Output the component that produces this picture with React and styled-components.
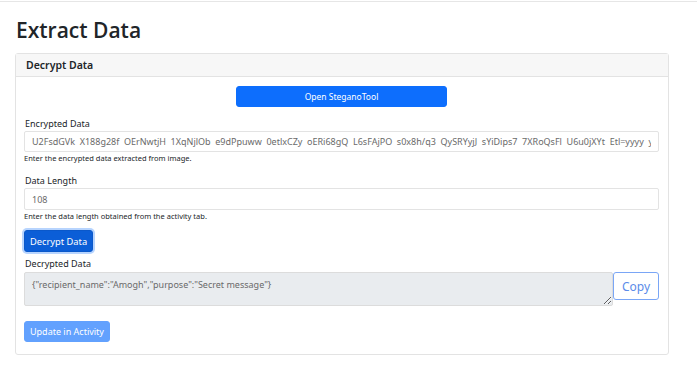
import React from "react";
import styled, { createGlobalStyle } from "styled-components";

const Global = createGlobalStyle`
  html, body { margin: 0; padding: 0; background: #fff; }
  body { font-family: "Noto Sans", "Open Sans", sans-serif; color: #212529; }
  * { box-sizing: border-box; }
`;

const Page = styled.div`
  margin-top: 1px;
  border-top: 1px solid #e6e6e6;
  padding: 15px 28px 0 15px;
`;

const Title = styled.h1`
  margin: 0 0 10px 1px;
  font-family: "Open Sans", "Noto Sans", sans-serif;
  font-size: 21px;
  line-height: 26px;
  font-weight: 600;
  color: #212529;
`;

const Card = styled.section`
  border: 1px solid #e3e3e3;
  border-radius: 3px;
  background: #fff;
`;

const CardHeader = styled.div`
  height: 23px;
  display: flex;
  align-items: center;
  padding: 0 10px;
  background: #f7f7f7;
  border-bottom: 1px solid #e3e3e3;
  font-size: 10.5px;
  font-weight: 600;
`;

const CardBody = styled.div`
  padding: 9px 9px 12px 8px;
  display: flex;
  flex-direction: column;
`;

const Centered = styled.div`
  display: flex;
  justify-content: center;
`;

const Button = styled.button`
  font-family: inherit;
  font-size: ${(p) => p.$fs || "8.5px"};
  height: ${(p) => p.$h || "21px"};
  width: ${(p) => p.$w || "auto"};
  padding: 0 ${(p) => p.$px || "7px"};
  border-radius: 3px;
  border: 1px solid ${(p) => (p.$variant === "dark" ? "#0a58ca" : p.$variant === "disabled" ? "#62a1fe" : "#0d6efd")};
  background: ${(p) =>
    p.$variant === "dark" ? "#0b5ed7" : p.$variant === "disabled" ? "#62a1fe" : "#0d6efd"};
  color: #fff;
  box-shadow: ${(p) => (p.$variant === "dark" ? "0 0 0 2px rgba(49,132,253,0.35)" : "none")};
  align-self: flex-start;
  margin-top: ${(p) => p.$mt || "0"};
  cursor: pointer;
`;

const OutlineButton = styled.button`
  font-family: inherit;
  font-size: 12px;
  width: 46px;
  height: 28px;
  padding: 0;
  border-radius: 3px;
  border: 1px solid #7aa6f6;
  background: #fff;
  color: #5b8be9;
  flex: none;
`;

const Label = styled.label`
  font-size: 9px;
  line-height: 12px;
  margin: ${(p) => p.$m || "0"};
  display: block;
`;

const Input = styled.input`
  font-family: inherit;
  font-size: 9px;
  height: ${(p) => p.$h || "21px"};
  width: 100%;
  padding: 0 7px;
  border: 1px solid #e3e3e3;
  border-radius: 2px;
  color: #6a6a6a;
  background: #fff;
  outline: none;
`;

const Help = styled.div`
  font-size: 7.5px;
  line-height: 10px;
  margin-top: 1px;
  color: #212529;
`;

const Row = styled.div`
  display: flex;
  align-items: flex-start;
  margin-top: 2px;
`;

const TextArea = styled.textarea`
  font-family: inherit;
  flex: 1;
  height: 34px;
  font-size: 9px;
  padding: 5px 7px;
  border: 1px solid #dcdcdc;
  border-radius: 2px;
  background: #e9ecef;
  color: #6a6a6a;
  resize: vertical;
  outline: none;
`;

const encrypted =
  "U2FsdGVk  X188g28f  OErNwtjH  1XqNjlOb  e9dPpuww  0etlxCZy  oERi68gQ  L6sFAjPO  s0x8h/q3  QySRYyjJ  sYiDips7  7XRoQsFl  U6u0jXYt  Etl=yyyy  yyyyy  yyyyy";

export default function App() {
  return (
    <>
      <Global />
      <Page>
        <Title>Extract Data</Title>
        <Card>
          <CardHeader>Decrypt Data</CardHeader>
          <CardBody>
            <Centered>
              <Button $w="211px">Open SteganoTool</Button>
            </Centered>
            <Label $m="11px 0 1px 1px">Encrypted Data</Label>
            <Input readOnly value={encrypted} />
            <Help>Enter the encrypted data extracted from image.</Help>
            <Label $m="12px 0 1px 1px">Data Length</Label>
            <Input readOnly value="108" $h="22px" />
            <Help>Enter the data length obtained from the activity tab.</Help>
            <Button $variant="dark" $h="22px" $fs="9.3px" $px="5px" $mt="9px">
              Decrypt Data
            </Button>
            <Label $m="6px 0 0 1px">Decrypted Data</Label>
            <Row>
              <TextArea readOnly value={'{"recipient_name":"Amogh","purpose":"Secret message"}'} />
              <OutlineButton>Copy</OutlineButton>
            </Row>
            <Button $variant="disabled" $h="21px" $fs="9px" $px="5px" $mt="15px">
              Update in Activity
            </Button>
          </CardBody>
        </Card>
      </Page>
    </>
  );
}
